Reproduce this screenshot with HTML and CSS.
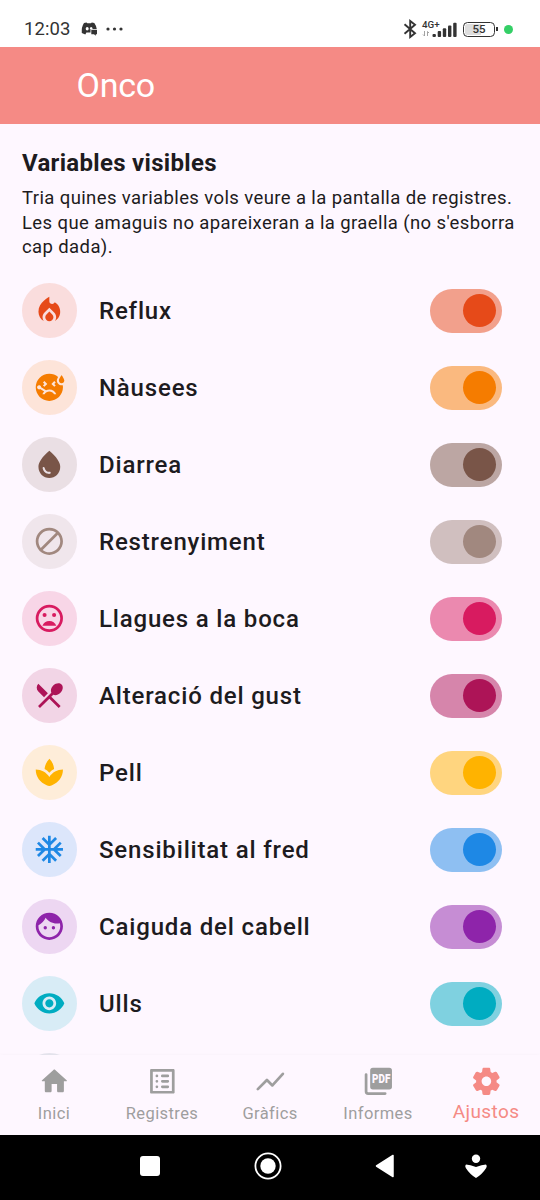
FILE: index.html
```html
<!DOCTYPE html>
<html lang="ca">
<head>
<meta charset="utf-8">
<title>Onco</title>
<link rel="stylesheet" href="styles.css">
</head>
<body>
<div class="screen">
  <div class="status">
    <span class="clock">12:03</span>
    <svg class="chat" width="17" height="14" viewBox="0 0 17 14"><path d="M3 1 5.500 .4 6.300 1.300H10L10.800 .4 13.300 1Q15.500 4 15.800 7.200H9.500V10.500H5.400L4.300 12.600 .8 11Q.3 5 3 1Z" fill="#333"/><ellipse cx="6.200" cy="6.700" rx="1.500" ry="1.800" fill="#fff"/><path d="M8.700 7.200Q8.800 5 10.400 5.100 11.600 5.300 11.600 7.200Z" fill="#fff"/><path d="M10.300 8H16V12.300H14.800V13.800L13 12.300H10.300Z" fill="#333"/></svg>
    <svg class="more" width="18" height="4" viewBox="0 0 18 4" fill="#333"><circle cx="2" cy="2" r="1.600"/><circle cx="8.500" cy="2" r="1.600"/><circle cx="15" cy="2" r="1.600"/></svg>
    <svg class="bt" width="14" height="20" viewBox="0 0 14 20" fill="none" stroke="#333" stroke-width="1.900"><path d="M1.500 5.200 12 14.200 7.200 18V2L12 5.800 1.500 14.800"/></svg>
    <div class="net"><span class="gen">4G+</span>
      <svg width="35" height="16" viewBox="0 0 35 16"><path d="M2.500 9v5M1 12.500 2.500 14M5.500 14V9.500L7 11" fill="none" stroke="#999" stroke-width=".9"/><g fill="#333"><rect x="10.500" y="12" width="3.400" height="3" rx="1"/><rect x="15.700" y="9" width="3.400" height="6" rx="1"/><rect x="20.800" y="6.300" width="3.400" height="8.700" rx="1"/><rect x="26" y="3.500" width="3.400" height="11.500" rx="1"/><rect x="31.200" y=".7" width="3.400" height="14.300" rx="1"/></g></svg>
    </div>
    <div class="battery"><span>55</span></div>
    <i class="dot"></i>
  </div>
  <header class="appbar"><h1>Onco</h1></header>
  <main class="content">
    <h2>Variables visibles</h2>
    <p>Tria quines variables vols veure a la pantalla de registres.<br>Les que amaguis no apareixeran a la graella (no s'esborra<br>cap dada).</p>
    <ul class="list">
      <li class="row reflux"><span class="badge"><svg viewBox="0 0 24 24"><path d="M12 12.900l-2.130 2.090C9.310 15.550 9 16.280 9 17.060 9 18.680 10.350 20 12 20s3-1.320 3-2.940c0-.78-.31-1.520-.87-2.070L12 12.900zM16 6l-.44.55C14.380 8.020 12 7.190 12 5.300V2S4 6 4 13c0 2.920 1.560 5.470 3.890 6.860-.56-.79-.89-1.760-.89-2.800 0-1.320.52-2.560 1.470-3.500L12 10.100l3.530 3.470c.95.93 1.470 2.170 1.470 3.500 0 1.020-.31 1.960-.85 2.750 1.890-1.150 3.290-3.060 3.710-5.300.66-3.550-1.070-6.900-3.860-8.520z"/></svg></span><span class="name">Reflux</span><span class="switch"></span></li>
      <li class="row nausea"><span class="badge"><svg viewBox="0 0 24 24"><path d="M21 9c-1.100 0-2-.9-2-2s2-4 2-4 2 2.900 2 4-.9 2-2 2zm-3.500-2c0-.73.41-1.710.92-2.660C16.680 2.880 14.440 2 11.990 2 6.470 2 2 6.480 2 12s4.470 10 9.990 10C17.520 22 22 17.520 22 12c0-.55-.06-1.090-.14-1.620-.28.07-.56.12-.86.12-1.930 0-3.500-1.570-3.500-3.500zm-1.880.38 1.060 1.060-1.060 1.060 1.060 1.060-1.060 1.060L13.500 9.500l2.120-2.120zm-8.300 1.060 1.060-1.060L10.500 9.500l-2.120 2.120-1.060-1.060L8.380 9.500 7.320 8.440zM15.440 17c-.69-1.190-1.970-2-3.440-2s-2.750.81-3.440 2H6.880c.3-.76.76-1.430 1.340-1.990L5.240 13.300c-.45.26-1.010.28-1.490 0-.72-.41-.96-1.330-.55-2.050.41-.72 1.330-.96 2.050-.55.48.28.74.78.74 1.290l3.580 2.070c.73-.36 1.550-.56 2.430-.56 2.330 0 4.320 1.450 5.120 3.500h-1.680z"/></svg></span><span class="name">Nàusees</span><span class="switch"></span></li>
      <li class="row diarrhea"><span class="badge"><svg viewBox="0 0 24 24"><path d="M12 2c-5.330 4.550-8 8.480-8 11.800 0 4.980 3.800 8.200 8 8.200s8-3.220 8-8.200c0-3.320-2.670-7.250-8-11.800zM7.830 14c.37 0 .67.26.74.62.41 2.220 2.280 2.980 3.640 2.870.43-.02.79.32.79.75 0 .4-.32.73-.72.75-2.130.13-4.620-1.090-5.190-4.120-.08-.45.28-.87.74-.87z"/></svg></span><span class="name">Diarrea</span><span class="switch"></span></li>
      <li class="row constipation"><span class="badge"><svg viewBox="0 0 24 24"><path d="M12 2C6.480 2 2 6.480 2 12s4.480 10 10 10 10-4.480 10-10S17.520 2 12 2zM4 12c0-4.420 3.580-8 8-8 1.850 0 3.550.63 4.900 1.690L5.690 16.900C4.630 15.550 4 13.850 4 12zm8 8c-1.850 0-3.550-.63-4.900-1.690L18.310 7.100C19.370 8.450 20 10.150 20 12c0 4.420-3.580 8-8 8z"/></svg></span><span class="name">Restrenyiment</span><span class="switch"></span></li>
      <li class="row mouth"><span class="badge"><svg viewBox="0 0 24 24"><circle cx="12" cy="12" r="9" fill="none" stroke="currentColor" stroke-width="2"/><circle cx="8.500" cy="9.500" r="1.500"/><circle cx="15.500" cy="9.500" r="1.500"/><path d="M12 14c-2.330 0-4.310 1.460-5.110 3.500h10.220c-.8-2.040-2.780-3.500-5.110-3.500z"/></svg></span><span class="name">Llagues a la boca</span><span class="switch"></span></li>
      <li class="row taste"><span class="badge"><svg viewBox="0 0 24 24"><path d="M8.100 13.340l2.830-2.830L3.910 3.500c-1.560 1.560-1.560 4.090 0 5.660l4.190 4.180zm6.780-1.810c1.530.71 3.680.21 5.270-1.380 1.910-1.910 2.280-4.650.81-6.120-1.460-1.460-4.200-1.100-6.120.81-1.590 1.590-2.090 3.740-1.380 5.270L3.700 19.870l1.410 1.410L12 14.410l6.880 6.880 1.410-1.410L13.410 13l1.470-1.470z"/></svg></span><span class="name">Alteració del gust</span><span class="switch"></span></li>
      <li class="row skin"><span class="badge"><svg viewBox="0 0 24 24"><path d="M15.490 9.630c-.18-2.790-1.310-5.510-3.430-7.630-2.140 2.140-3.320 4.860-3.550 7.630 1.280.68 2.460 1.560 3.490 2.630 1.030-1.060 2.210-1.940 3.490-2.630zM12 15.450C9.850 12.170 6.180 10 2 10c0 5.320 3.360 9.820 8.030 11.490.63.23 1.290.4 1.970.51.68-.12 1.330-.29 1.970-.51C18.640 19.820 22 15.320 22 10c-4.180 0-7.850 2.170-10 5.450z"/></svg></span><span class="name">Pell</span><span class="switch"></span></li>
      <li class="row cold"><span class="badge"><svg viewBox="0 0 24 24"><path d="M22 11h-4.170l3.240-3.240-1.410-1.420L15 11h-2V9l4.660-4.660-1.420-1.410L13 6.170V2h-2v4.170L7.760 2.930 6.340 4.340 11 9v2H9L4.340 6.340 2.930 7.760 6.170 11H2v2h4.170l-3.240 3.240 1.410 1.420L9 13h2v2l-4.660 4.660 1.420 1.410L11 17.830V22h2v-4.170l3.240 3.240 1.420-1.410L13 15v-2h2l4.660 4.660 1.410-1.420L17.830 13H22z"/></svg></span><span class="name">Sensibilitat al fred</span><span class="switch"></span></li>
      <li class="row hair"><span class="badge"><svg viewBox="0 0 24 24"><path d="M9 11.750a1.250 1.250 0 1 0 0 2.500 1.250 1.250 0 0 0 0-2.500zm6 0a1.250 1.250 0 1 0 0 2.500 1.250 1.250 0 0 0 0-2.500zM12 2C6.480 2 2 6.480 2 12s4.480 10 10 10 10-4.480 10-10S17.520 2 12 2zm0 18c-4.410 0-8-3.590-8-8 0-.29.02-.58.05-.86 2.360-1.050 4.230-2.980 5.210-5.370C11.070 8.330 14.050 10 17.420 10c.78 0 1.530-.09 2.250-.26.21.71.33 1.470.33 2.260 0 4.410-3.590 8-8 8z"/></svg></span><span class="name">Caiguda del cabell</span><span class="switch"></span></li>
      <li class="row eyes"><span class="badge"><svg viewBox="0 0 24 24"><path d="M12 4.500C7 4.500 2.730 7.610 1 12c1.730 4.390 6 7.500 11 7.500s9.270-3.110 11-7.500c-1.730-4.390-6-7.500-11-7.500zM12 17c-2.760 0-5-2.240-5-5s2.240-5 5-5 5 2.240 5 5-2.240 5-5 5zm0-8c-1.660 0-3 1.340-3 3s1.340 3 3 3 3-1.340 3-3-1.340-3-3-3z"/></svg></span><span class="name">Ulls</span><span class="switch"></span></li>
      <li class="row next"><span class="badge"></span></li>
    </ul>
  </main>
  <nav class="tabs">
    <a class="tab"><svg viewBox="0 0 24 24"><path d="M10 19v-5h4v5c0 .55.45 1 1 1h3c.55 0 1-.45 1-1v-7h1.700c.46 0 .68-.57.33-.87L12.670 3.600c-.38-.34-.96-.34-1.340 0l-8.360 7.530c-.34.3-.13.87.33.87H5v7c0 .55.45 1 1 1h3c.55 0 1-.45 1-1z"/></svg><span>Inici</span></a>
    <a class="tab"><svg viewBox="0 0 24 24"><path d="M19 5v14H5V5h14m1.100-2H3.900c-.5 0-.9.4-.9.9v16.200c0 .4.4.9.9.9h16.200c.4 0 .9-.5.9-.9V3.900c0-.5-.5-.9-.9-.9z"/><path d="M12 8h4M12 12h4M12 16h4M8 8h0M8 12h0M8 16h0" fill="none" stroke="currentColor" stroke-width="2" stroke-linecap="round"/></svg><span>Registres</span></a>
    <a class="tab"><svg viewBox="0 0 24 24"><path d="M2.800 17.700 9.500 11l4 4L21.200 6.500" fill="none" stroke="currentColor" stroke-width="2" stroke-linecap="round" stroke-linejoin="round"/></svg><span>Gràfics</span></a>
    <a class="tab"><svg viewBox="0 0 24 24"><rect x="6" y="2" width="16" height="16" rx="2"/><path d="M3 7v12.500Q3 21 4.500 21H17" fill="none" stroke="currentColor" stroke-width="2" stroke-linecap="round"/><text class="pdf" x="14.100" y="12.900" text-anchor="middle" textLength="13.400" lengthAdjust="spacingAndGlyphs">PDF</text></svg><span>Informes</span></a>
    <a class="tab active"><svg viewBox="0 0 24 24"><path d="M19.500 12c0-.23-.01-.45-.03-.68l1.860-1.410c.4-.3.51-.86.26-1.300l-1.870-3.230c-.25-.44-.79-.62-1.250-.42l-2.150.91c-.37-.26-.76-.49-1.170-.68l-.29-2.310C14.800 2.380 14.370 2 13.870 2h-3.730c-.51 0-.94.38-1 .88l-.29 2.310c-.41.19-.8.42-1.170.68l-2.150-.91c-.46-.2-1-.02-1.250.42L2.410 8.620c-.25.44-.14.99.26 1.300l1.860 1.410c-.02.22-.03.44-.03.67s.01.45.03.68l-1.860 1.410c-.4.3-.51.86-.26 1.300l1.870 3.230c.25.44.79.62 1.250.42l2.150-.91c.37.26.76.49 1.170.68l.29 2.310c.06.5.49.88.99.88h3.730c.5 0 .93-.38.99-.88l.29-2.310c.41-.19.8-.42 1.170-.68l2.150.91c.46.2 1 .02 1.250-.42l1.870-3.230c.25-.44.14-.99-.26-1.300l-1.860-1.410c.03-.23.04-.45.04-.68zm-7.460 3.500c-1.930 0-3.500-1.570-3.500-3.500s1.570-3.500 3.500-3.500 3.500 1.570 3.500 3.500-1.570 3.500-3.500 3.500z"/></svg><span>Ajustos</span></a>
  </nav>
  <div class="system">
    <svg width="20" height="20" viewBox="0 0 20 20"><rect width="20" height="20" rx="3"/></svg>
    <svg width="28" height="28" viewBox="0 0 28 28"><circle cx="14" cy="14" r="12.600" fill="none" stroke="#fff" stroke-width="1.800"/><circle cx="14" cy="14" r="7.700"/></svg>
    <svg width="20" height="24" viewBox="0 0 20 24"><path d="M1.500 12 18 1.500v21Z" stroke="#fff" stroke-width="1.500" stroke-linejoin="round"/></svg>
    <svg width="24" height="25" viewBox="0 0 24 25"><circle cx="12" cy="4.700" r="4.200"/><path d="M2 10.500Q6 10.600 12 13 18 10.600 22 10.500 23.500 11.500 22.200 14 18 20.500 12 24 6 20.500 1.800 14 .5 11.500 2 10.500Z"/></svg>
  </div>
</div>
</body>
</html>
```

FILE: styles.css
```css
* { box-sizing: border-box; }
body { margin: 0; background: #fef7ff; color: #1d1b20; font-family: Roboto, sans-serif; }
h1, h2, p, ul { margin: 0; padding: 0; }
.screen { display: flex; flex-direction: column; width: 540px; height: 1200px; overflow: hidden; }

.status { display: flex; align-items: center; height: 46.500px; padding: 11.500px 0 0 24px; background: #fff; color: #333; flex: none; }
.clock { width: 56.500px; font-size: 18.500px; letter-spacing: .1px; }
.more { margin-left: 8px; }
.bt { margin-left: 279.500px; }
.net { display: flex; position: relative; align-items: flex-end; width: 35px; height: 18px; margin-left: 5px; }
.gen { position: absolute; top: -1.500px; left: 0; font-size: 9.800px; font-weight: 500; line-height: 11px; }
.battery { display: grid; position: relative; flex: none; place-items: center; width: 32px; height: 15px; margin-left: 6px; border: 1.500px solid #333; border-radius: 4.500px; background: linear-gradient(90deg, #ddd 55%, #fff 55%); box-shadow: inset 0 0 0 1px #fff; font-size: 11.500px; font-weight: 500; line-height: 12px; }
.battery::after { content: ""; position: absolute; right: -4px; top: 4px; width: 2px; height: 4px; background: #333; }
.dot { width: 9px; height: 9px; margin-left: 9px; border-radius: 50%; background: #34cf66; }

.appbar { display: flex; align-items: center; flex: none; height: 77px; padding-left: 76.500px; background: #f58a85; color: #fff; }
.appbar h1 { font-size: 34px; font-weight: 400; line-height: 40px; letter-spacing: -.2px; }

.content { flex: 1; min-height: 0; overflow: hidden; padding: 23px 22px 0; }
h2 { font-size: 24px; font-weight: 700; line-height: 32px; letter-spacing: .3px; }
p { margin-top: 7.500px; font-size: 18.500px; line-height: 24.500px; letter-spacing: .39px; white-space: nowrap; }
.list { margin-top: 12.500px; list-style: none; }
.row { display: flex; align-items: center; height: 77px; color: var(--c); }
.badge { display: grid; place-items: center; width: 54.500px; height: 54.500px; border-radius: 50%; background: color-mix(in srgb, var(--c) 15%, transparent); }
.badge svg { width: 32.700px; height: 32.700px; fill: currentColor; }
.name { flex: 1; margin-left: 22.500px; color: #1d1b20; font-size: 24px; font-weight: 500; letter-spacing: .83px; }
.switch { display: flex; justify-content: flex-end; width: 71.500px; height: 44px; margin-right: 16.500px; padding: 5.500px; border-radius: 22px; background: color-mix(in srgb, var(--c) 50%, transparent); }
.switch::before { content: ""; width: 33px; height: 33px; border-radius: 50%; background: var(--c); }
.reflux { --c: #e64a19; }
.nausea { --c: #f57c00; }
.diarrhea { --c: #795548; }
.constipation { --c: #a1887f; }
.mouth { --c: #d81b60; }
.taste { --c: #ad1457; }
.skin { --c: #ffb300; }
.cold { --c: #1e88e5; }
.hair { --c: #8e24aa; }
.eyes { --c: #00acc1; }
.next { --c: #607d8b; }

.tabs { display: grid; grid-template-columns: repeat(5, 1fr); flex: none; height: 80px; background: #fef7ff; box-shadow: 0 -1px 3px rgb(0 0 0 / 2%); }
.tab { display: flex; flex-direction: column; align-items: center; padding-top: 10px; color: #9e9e9e; font-size: 16.500px; line-height: 22px; letter-spacing: .4px; }
.tab svg { width: 32.700px; height: 32.700px; margin-bottom: 5px; fill: currentColor; }
.tab.active { color: #f58a85; font-size: 19px; }
.tab.active svg { margin-bottom: 3px; }
.pdf { fill: #fef7ff; font: 900 9.200px Roboto, sans-serif; letter-spacing: 0; }

.system { display: flex; align-items: center; flex: none; height: 65px; padding: 0 0 3px 140px; background: #000; }
.system svg { fill: #fff; }
.system svg:nth-child(2) { margin-left: 94px; }
.system svg:nth-child(3) { margin-left: 93px; }
.system svg:nth-child(4) { margin-left: 69px; }
```
